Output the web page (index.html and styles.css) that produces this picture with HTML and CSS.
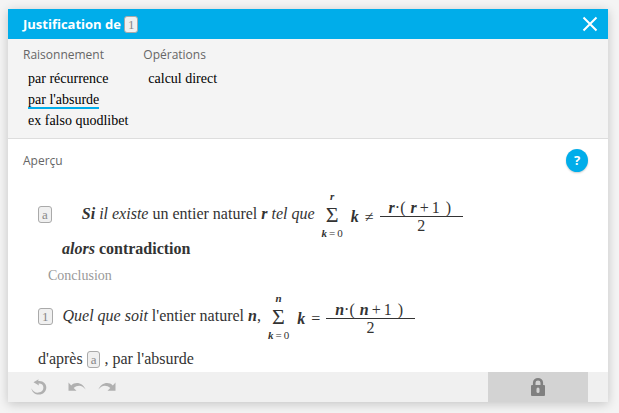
FILE: index.html
```html
<!DOCTYPE html>
<html lang="fr">
<head>
<meta charset="utf-8">
<title>Justification</title>
<link rel="stylesheet" href="styles.css">
</head>
<body>
<main class="dialog">
  <header class="titlebar">
    <h1 class="title">Justification de</h1>
    <span class="tag">1</span>
    <button class="close" type="button" aria-label="Fermer">
      <svg width="16" height="16" viewBox="0 0 16 16"><path d="M1.500 1.500 14.500 14.500M14.500 1.500 1.500 14.500" fill="none" stroke="#fff" stroke-width="2"/></svg>
    </button>
  </header>
  <nav class="choices">
    <section class="group">
      <h2 class="label">Raisonnement</h2>
      <div class="options">
        <button class="choice" type="button">par récurrence</button>
        <button class="choice selected" type="button">par l'absurde</button>
        <button class="choice" type="button">ex falso quodlibet</button>
      </div>
    </section>
    <section class="group">
      <h2 class="label">Opérations</h2>
      <div class="options">
        <button class="choice" type="button">calcul direct</button>
      </div>
    </section>
  </nav>
  <section class="preview">
    <div class="preview-head">
      <h2 class="label">Aperçu</h2>
      <button class="help" type="button" aria-label="Aide">?</button>
    </div>
    <div class="proof">
      <div class="line formula">
        <span class="tag">a</span>
        <p class="statement hypothesis"><b><i>Si</i></b> <i>il existe</i> un entier naturel <b><i>r</i></b> <i>tel que</i></p>
        <span class="sum"><b><i>r</i></b><span class="sigma">Σ</span><span class="from"><b><i>k</i></b><span>=</span><span>0</span></span></span>
        <span class="relation"><b><i>k</i></b><span>≠</span></span>
        <span class="fraction">
          <span class="numerator"><b><i>r</i></b><span>·</span><span>(</span><b class="term"><i>r</i></b><span class="plus">+</span><span class="one">1</span><span>)</span></span>
          <span>2</span>
        </span>
      </div>
      <p class="line then"><b><i>alors</i> contradiction</b></p>
      <p class="line conclusion">Conclusion</p>
      <div class="line formula">
        <span class="tag">1</span>
        <p class="statement"><i>Quel que soit</i> l'entier naturel <b><i>n</i></b>,</p>
        <span class="sum"><b><i>n</i></b><span class="sigma">Σ</span><span class="from"><b><i>k</i></b><span>=</span><span>0</span></span></span>
        <span class="relation"><b><i>k</i></b><span>=</span></span>
        <span class="fraction">
          <span class="numerator"><b><i>n</i></b><span>·</span><span>(</span><b class="term"><i>n</i></b><span class="plus">+</span><span class="one">1</span><span>)</span></span>
          <span>2</span>
        </span>
      </div>
      <p class="line reason">d'après <span class="tag">a</span> , par l'absurde</p>
    </div>
  </section>
  <footer class="toolbar">
    <button class="tool reset" type="button" aria-label="Recommencer">
      <svg width="16" height="16" viewBox="0 0 16 16"><path d="M2.500 3.200 7.600.2 7.200 2C12 1.300 15.300 4.500 15.300 8.500 15.300 12.500 12 15.600 8 15.600 4 15.600.8 13 .4 9.200 2 12.500 4.500 14 7.500 13.600 10.500 13.300 12.400 11.200 12.400 8.500 12.400 5.800 10.200 4.300 7.500 4.600L8 6.400Z" fill="#b0b0b0"/></svg>
    </button>
    <button class="tool" type="button" aria-label="Annuler">
      <svg width="18" height="10" viewBox="0 0 18 10"><path d="M.5.5V8.800H8.500L5.700 6C9.500 2.500 14.500 2.800 17.600 7.500 15.500 1.500 8-1.500 3.200 3.400Z" fill="#b0b0b0"/></svg>
    </button>
    <button class="tool" type="button" aria-label="Rétablir">
      <svg width="18" height="10" viewBox="0 0 18 10"><path d="M17.500.5V8.800H9.500L12.300 6C8.500 2.500 3.500 2.800.4 7.500 2.500 1.500 10-1.500 14.800 3.400Z" fill="#b0b0b0"/></svg>
    </button>
    <button class="lock" type="button" aria-label="Verrouiller">
      <svg width="14" height="18" viewBox="0 0 14 18"><path d="M3.200 7.200V4.800a3.800 3.500 0 0 1 7.600 0V7.200" fill="none" stroke="#808080" stroke-width="2.600"/><rect y="7" width="14" height="11" rx="1" fill="#808080"/><rect x="5.500" y="9.500" width="3" height="5.500" rx="1.500" fill="#d3d3d3"/></svg>
    </button>
  </footer>
</main>
</body>
</html>
```
FILE: styles.css
```css
* {
  box-sizing: border-box;
}

body {
  margin: 0;
  padding: 9px 11px 11px 8px;
  min-height: 100vh;
  display: flex;
  background: #f4f4f4;
  color: #333;
  font: 16px/18px "Liberation Serif", serif;
}

h1, h2, p {
  margin: 0;
}

button {
  margin: 0;
  padding: 0;
  border: 0;
  background: none;
  color: inherit;
  font: inherit;
  cursor: pointer;
}

svg {
  display: block;
}

.dialog {
  flex: 1;
  display: flex;
  flex-direction: column;
  background: #fff;
  box-shadow: 0 2px 10px rgba(0, 0, 0, 0.2);
}

.titlebar {
  display: flex;
  align-items: center;
  gap: 3px;
  height: 30px;
  padding: 0 10px 0 15px;
  background: #00adea;
}

.title {
  color: #fff;
  font: bold 13px/18px "Open Sans", sans-serif;
}

.close {
  margin-left: auto;
}

.tag {
  display: inline-block;
  padding: 0 3px;
  border: 1px solid #aaa;
  border-radius: 3px;
  background: #f0f0f0;
  color: #888;
  font-size: 13px;
  line-height: 15px;
}

.choices {
  display: flex;
  gap: 15px;
  padding: 7px 15px 8px;
  border-bottom: 1px solid #ddd;
  background: #f4f4f4;
}

.label {
  color: #666;
  font: 12px/18px "Open Sans", sans-serif;
}

.options {
  display: flex;
  flex-direction: column;
  align-items: flex-start;
  gap: 4px;
  padding: 7px 0 0 5px;
}

.choice {
  border-bottom: 2px solid transparent;
  color: #000;
  font-size: 14px;
  line-height: 15px;
}

.selected {
  border-color: #00adea;
}

.preview {
  flex: 1;
  padding: 10px 20px 0 15px;
}

.preview-head {
  display: flex;
  align-items: center;
  justify-content: space-between;
}

.help {
  width: 22px;
  height: 23px;
  border-radius: 50%;
  background: #00adea;
  box-shadow: 0 1px 2px rgba(0, 0, 0, 0.2);
  color: #fff;
  font: bold 13px/23px "Noto Sans", sans-serif;
}

.proof {
  padding: 19px 15px 0;
}

.formula {
  display: flex;
  align-items: center;
  height: 46px;
}

.statement {
  margin: 0 7px 0 10px;
}

.hypothesis {
  margin-left: 30px;
}

.sum {
  display: flex;
  flex-direction: column;
  align-items: center;
  font-size: 11px;
  line-height: 12px;
}

.sigma {
  font-size: 22px;
  line-height: 25px;
}

.from {
  display: flex;
  gap: 2px;
}

.relation {
  display: flex;
  gap: 6px;
  margin: 6px 6px 0 8px;
}

.fraction {
  display: flex;
  flex-direction: column;
  align-items: center;
  margin-top: 4px;
  line-height: 17px;
}

.numerator {
  display: flex;
  padding: 0 12px 0 9px;
  border-bottom: 1px solid #333;
}

.term {
  margin-left: 5px;
}

.plus {
  margin: 0 3px;
}

.one {
  margin-right: 6px;
}

.then {
  margin: 3px 0 0 24px;
}

.conclusion {
  margin: 9px 0 8px 10px;
  color: #999;
  font-size: 14px;
}

.reason {
  margin-top: 11px;
}

.toolbar {
  display: flex;
  align-items: center;
  gap: 12px;
  height: 30px;
  padding: 0 20px 0 23px;
  background: #f0f0f0;
}

.reset {
  margin-right: 9px;
}

.lock {
  display: flex;
  align-items: center;
  justify-content: center;
  width: 100px;
  height: 30px;
  margin-left: auto;
  background: #d3d3d3;
}
```
